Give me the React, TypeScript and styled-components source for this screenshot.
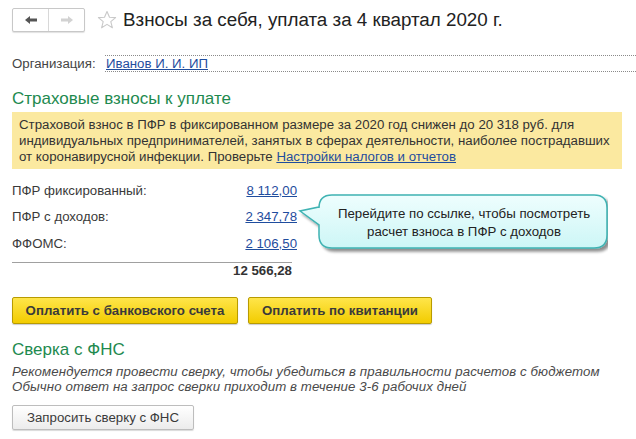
import React from "react";
import styled, { createGlobalStyle } from "styled-components";

const Global = createGlobalStyle`
  html, body { margin: 0; padding: 0; background: #fff; }
  body {
    font-family: "Liberation Sans", Arial, sans-serif;
    font-size: 13.25px;
    color: #3a3a3a;
  }
`;

const Page = styled.div`
  width: 636px;
  height: 439px;
  box-sizing: border-box;
  padding: 8px 14px 0 12px;
  position: relative;
  overflow: hidden;
`;

const Header = styled.div`
  display: flex;
  align-items: center;
  height: 24px;
`;

const NavGroup = styled.div`
  display: flex;
  border: 1px solid #c8c8c8;
  border-radius: 2px;
  box-shadow: 0 1px 1px rgba(0, 0, 0, 0.12);
  background: #fff;
`;

const NavButton = styled.div`
  width: 35px;
  height: 22px;
  display: flex;
  align-items: center;
  justify-content: center;
  & + & { border-left: 1px solid #d8d8d8; }
`;

const StarWrap = styled.div`
  margin-left: 12px;
  width: 20px;
  height: 20px;
  display: flex;
`;

const Title = styled.h1`
  margin: 0 0 0 6px;
  font-weight: normal;
  font-size: 18.8px;
  color: #222;
  white-space: nowrap;
`;

const OrgRow = styled.div`
  display: flex;
  align-items: center;
  margin-top: 23px;
  margin-right: -14px;
`;

const OrgLabel = styled.span`
  color: #444;
  width: 93px;
  flex: none;
`;

const OrgField = styled.div`
  flex: 1;
  height: 15px;
  border-top: 1px dotted #8a8a8a;
  border-bottom: 1px dotted #8a8a8a;
  display: flex;
  align-items: center;
  padding-left: 1px;
`;

const Link = styled.a`
  color: #1f4d9e;
  text-decoration: underline;
  cursor: pointer;
`;

const SectionTitle = styled.h2<{ $top: number }>`
  margin: ${(p) => p.$top}px 0 0;
  font-size: 17px;
  font-weight: normal;
  color: #1e8a4f;
  line-height: 20px;
`;

const Notice = styled.div`
  margin-top: 3px;
  background: #fbe9a0;
  padding: 5px 7px 4px;
  line-height: 16px;
  color: #333;
  white-space: nowrap;
`;

const Amounts = styled.div`
  position: relative;
  margin-top: 8px;
  width: 285px;
`;

const AmountRow = styled.div`
  display: grid;
  grid-template-columns: 1fr auto;
  height: 26.5px;
  align-items: center;
`;

const Divider = styled.div`
  margin-top: 5px;
  height: 1px;
  background: #a0a0a0;
  width: 280px;
`;

const Total = styled.div`
  text-align: right;
  font-weight: bold;
  color: #333;
  width: 280px;
  margin-top: 1px;
  line-height: 14px;
`;

const Callout = styled.div`
  position: absolute;
  left: 286px;
  top: 17px;
  width: 310px;
  height: 64px;
`;

const CalloutText = styled.div`
  position: absolute;
  left: 22px;
  top: 11px;
  width: 288px;
  text-align: center;
  line-height: 18px;
  color: #222;
`;

const ButtonRow = styled.div`
  display: flex;
  gap: 10px;
  margin-top: 19px;
`;

const YellowButton = styled.button<{ $w: number }>`
  width: ${(p) => p.$w}px;
  height: 27px;
  padding: 0;
  font-family: inherit;
  font-size: 13.25px;
  font-weight: bold;
  color: #3a3a3a;
  background: linear-gradient(#ffe54a, #f2cc00);
  border: 1px solid #b89b00;
  border-radius: 2px;
  box-shadow: 0 1px 1px rgba(0, 0, 0, 0.2);
  white-space: nowrap;
`;

const Hint = styled.div`
  margin-top: 4px;
  font-style: italic;
  color: #4a4a4a;
  line-height: 15px;
  white-space: nowrap;
  letter-spacing: 0.1px;
`;

const GrayButton = styled.button`
  margin-top: 11px;
  height: 25px;
  width: 182px;
  padding: 0;
  font-family: inherit;
  font-size: 13.25px;
  color: #3a3a3a;
  background: linear-gradient(#ffffff, #ececec);
  border: 1px solid #bdbdbd;
  border-radius: 2px;
  box-shadow: 0 1px 1px rgba(0, 0, 0, 0.15);
  white-space: nowrap;
`;

const ArrowLeft = () => (
  <svg width="14" height="10" viewBox="0 0 14 10">
    <path d="M1 5 L6 1 L6 3.5 L13 3.5 L13 6.5 L6 6.5 L6 9 Z" fill="#555" />
  </svg>
);
const ArrowRight = () => (
  <svg width="14" height="10" viewBox="0 0 14 10">
    <path d="M13 5 L8 1 L8 3.5 L1 3.5 L1 6.5 L8 6.5 L8 9 Z" fill="#d2d2d2" />
  </svg>
);
const Star = () => (
  <svg width="20" height="20" viewBox="0 0 20 20">
    <path
      d="M10 1.5 L12.5 7.3 L18.6 7.6 L13.8 11.6 L15.4 17.8 L10 14.4 L4.6 17.8 L6.2 11.6 L1.4 7.6 L7.5 7.3 Z"
      fill="none"
      stroke="#c9c9c9"
      strokeWidth="1.1"
      strokeLinejoin="round"
    />
  </svg>
);

const Bubble = () => (
  <svg width="310" height="64" viewBox="0 0 310 64" style={{ position: "absolute", left: 0, top: 0 }}>
    <defs>
      <linearGradient id="bg" x1="0" y1="0" x2="0" y2="1">
        <stop offset="0" stopColor="#eefefe" />
        <stop offset="1" stopColor="#cdf6f6" />
      </linearGradient>
      <filter id="sh" x="-10%" y="-20%" width="130%" height="160%">
        <feGaussianBlur in="SourceAlpha" stdDeviation="1.6" />
        <feOffset dx="3" dy="3" />
        <feComponentTransfer>
          <feFuncA type="linear" slope="0.45" />
        </feComponentTransfer>
        <feMerge>
          <feMergeNode />
          <feMergeNode in="SourceGraphic" />
        </feMerge>
      </filter>
    </defs>
    <path
      filter="url(#sh)"
      d="M46 2 L308 2 Q321 2 321 15 L321 42 Q321 55 308 55 L46 55 Q33 55 33 42 L33 32 L14 18 L33 14 L33 15 Q33 2 46 2 Z"
      fill="url(#bg)"
      stroke="#3fb3b3"
      strokeWidth="1.5"
      transform="translate(-12 -1)"
    />
  </svg>
);

export default function App() {
  return (
    <Page>
      <Global />
      <Header>
        <NavGroup>
          <NavButton><ArrowLeft /></NavButton>
          <NavButton><ArrowRight /></NavButton>
        </NavGroup>
        <StarWrap><Star /></StarWrap>
        <Title>Взносы за себя, уплата за 4 квартал 2020 г.</Title>
      </Header>

      <OrgRow>
        <OrgLabel>Организация:</OrgLabel>
        <OrgField><Link>Иванов И. И. ИП</Link></OrgField>
      </OrgRow>

      <SectionTitle $top={17}>Страховые взносы к уплате</SectionTitle>
      <Notice>
        Страховой взнос в ПФР в фиксированном размере за 2020 год снижен до 20 318 руб. для
        <br />
        индивидуальных предпринимателей, занятых в сферах деятельности, наиболее пострадавших
        <br />
        от коронавирусной инфекции. Проверьте <Link>Настройки налогов и отчетов</Link>
      </Notice>

      <Amounts>
        <AmountRow><span>ПФР фиксированный:</span><Link>8 112,00</Link></AmountRow>
        <AmountRow><span>ПФР с доходов:</span><Link>2 347,78</Link></AmountRow>
        <AmountRow><span>ФФОМС:</span><Link>2 106,50</Link></AmountRow>
        <Divider />
        <Total>12 566,28</Total>
        <Callout>
          <Bubble />
          <CalloutText>
            Перейдите по ссылке, чтобы посмотреть
            <br />
            расчет взноса в ПФР с доходов
          </CalloutText>
        </Callout>
      </Amounts>

      <ButtonRow>
        <YellowButton $w={226}>Оплатить с банковского счета</YellowButton>
        <YellowButton $w={184}>Оплатить по квитанции</YellowButton>
      </ButtonRow>

      <SectionTitle $top={16}>Сверка с ФНС</SectionTitle>
      <Hint>
        Рекомендуется провести сверку, чтобы убедиться в правильности расчетов с бюджетом
        <br />
        Обычно ответ на запрос сверки приходит в течение 3-6 рабочих дней
      </Hint>
      <GrayButton>Запросить сверку с ФНС</GrayButton>
    </Page>
  );
}
